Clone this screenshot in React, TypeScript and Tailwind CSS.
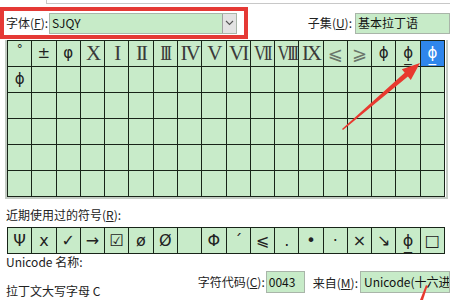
const CJK = { fontFamily: '"Noto Sans CJK SC", "Noto Sans", sans-serif' };
const SYM = { fontFamily: '"DejaVu Sans", "Noto Sans", sans-serif' };
const SERIF = { fontFamily: '"Liberation Serif", "DejaVu Serif", serif' };

type Cell = { ch: string; kind?: "serif" | "sym" | "sel"; size?: string };

const row1: Cell[] = [
  { ch: "°", size: "text-[12px] -translate-y-[5px]" },
  { ch: "±" },
  { ch: "φ" },
  { ch: "X", kind: "serif" },
  { ch: "I", kind: "serif" },
  { ch: "II", kind: "serif" },
  { ch: "III", kind: "serif" },
  { ch: "IV", kind: "serif" },
  { ch: "V", kind: "serif" },
  { ch: "VI", kind: "serif" },
  { ch: "VII", kind: "serif" },
  { ch: "VIII", kind: "serif" },
  { ch: "IX", kind: "serif" },
  { ch: "⩽", size: "text-[18px] text-[#6a756a]" },
  { ch: "⩾", size: "text-[18px] text-[#6a756a]" },
  { ch: "ɸ" },
  { ch: "ɸ̲" },
  { ch: "ɸ̲", kind: "sel" },
];

const recent: string[] = ["Ψ", "x", "✓", "→", "☑", "ø", "Ø", "", "Φ", "ˊ", "⩽", ".", "•", "·", "×", "↘", "ɸ̲", "□"];

function GridCell({ cell }: { cell?: Cell }) {
  if (!cell) return <div className="h-[26px] border-r border-b border-[#182418]" />;
  if (cell.kind === "sel")
    return (
      <div className="h-[26px] border-r border-b border-[#182418] bg-[#2f86ec] flex items-center justify-center text-white text-[15px]" style={SYM}>
        {cell.ch}
      </div>
    );
  if (cell.kind === "serif")
    return (
      <div className="h-[26px] border-r border-b border-[#182418] flex items-center justify-center overflow-hidden">
        <span
          className={`text-[21px] leading-none text-[#3a3a3a] ${cell.ch.length > 2 ? "tracking-[-3px] scale-x-[0.8]" : "tracking-[-2px]"}`}
          style={SERIF}
        >
          {cell.ch}
        </span>
      </div>
    );
  return (
    <div className="h-[26px] border-r border-b border-[#182418] flex items-center justify-center text-[#222]" style={SYM}>
      <span className={cell.size ?? "text-[15px]"}>{cell.ch}</span>
    </div>
  );
}

function Label({ text, hot, rest = "):" }: { text: string; hot: string; rest?: string }) {
  return (
    <span className="text-[12px] text-[#222] whitespace-nowrap" style={CJK}>
      {text}(<span className="underline">{hot}</span>{rest}
    </span>
  );
}

export default function App() {
  const grid: (Cell | undefined)[] = [...row1, { ch: "ɸ" }];
  while (grid.length < 18 * 6) grid.push(undefined);

  return (
    <div className="relative w-[450px] h-[300px] bg-white overflow-hidden">
      <div className="h-[7px]">
        <div className="ml-[46px] h-[4px] border-l border-b border-[#c8c8c8]" />
      </div>

      <div className="flex items-start h-[33px]">
        <div className="w-[248px] h-[32px] border-4 border-[#e53935] flex items-center pl-[2px]">
          <Label text="字体" hot="F" />
          <div className="ml-[1px] h-[21px] w-[188px] border border-[#a9b5a9] bg-[#c7ebc8] flex items-center">
            <span className="pl-[2px] text-[12px] text-[#111] flex-1" style={CJK}>SJQY</span>
            <div className="h-full w-[14px] border-l border-[#a0a0a0] bg-[#e3e3e3] flex items-center justify-center">
              <svg width="9" height="6" viewBox="0 0 9 6">
                <path d="M1 1 L4.5 4.5 L8 1" stroke="#555" strokeWidth="1.1" fill="none" />
              </svg>
            </div>
          </div>
        </div>
        <div className="ml-auto flex items-center h-[32px]">
          <Label text="子集" hot="U" />
          <div className="ml-[3px] h-[21px] w-[95px] border border-[#a9b5a9] bg-[#c7ebc8] flex items-center pl-[2px]">
            <span className="text-[12px] text-[#111] whitespace-nowrap" style={CJK}>基本拉丁语</span>
          </div>
        </div>
      </div>

      <div className="ml-[5px] w-[443px] border-l-2 border-r-2 border-b-2 border-[#c4ccc4]">
        <div className="grid grid-cols-[repeat(18,minmax(0,1fr))] w-[438px] border-t border-l border-[#182418] bg-[#c8ebc9]">
          {grid.map((c, i) => (
            <GridCell key={i} cell={c} />
          ))}
        </div>
      </div>

      <div className="pl-[6px] mt-[9px] h-[14px] flex items-center">
        <Label text="近期使用过的符号" hot="R" />
      </div>

      <div className="ml-[7px] mt-[5px] w-[438px] grid grid-cols-[repeat(18,minmax(0,1fr))] border-t border-l border-[#182418] bg-[#c8ebc9]">
        {recent.map((ch, i) => (
          <div key={i} className="h-[26px] border-r border-b border-[#182418] flex items-center justify-center text-[16px] text-[#222]" style={SYM}>
            {ch}
          </div>
        ))}
      </div>

      <div className="flex pl-[6px]">
        <div className="w-[221px] flex flex-col">
          <span className="text-[12px] text-[#222] leading-[16px]" style={CJK}>Unicode 名称:</span>
          <span className="text-[12px] text-[#222] leading-[16px] mt-[13px]" style={CJK}>拉丁文大写字母 C</span>
        </div>
        <div className="flex items-center h-[22px] mt-[17px]">
          <Label text="字符代码" hot="C" />
          <div className="ml-[1px] h-[22px] w-[39px] border border-[#a9b5a9] bg-[#c7ebc8] flex items-center pl-[2px]">
            <span className="text-[12px] text-[#111]" style={CJK}>0043</span>
          </div>
          <span className="ml-[8px]"><Label text="来自" hot="M" /></span>
          <div className="ml-[2px] h-[22px] w-[90px] border border-[#a9b5a9] bg-[#c7ebc8] flex items-center pl-[3px] overflow-hidden">
            <span className="text-[12px] text-[#111] whitespace-nowrap" style={CJK}>Unicode(十六进制)</span>
          </div>
        </div>
      </div>

      {/* red arrows drawn over the dialog */}
      <svg className="absolute inset-0 pointer-events-none" width="450" height="300" viewBox="0 0 450 300">
        <polygon points="342,129 404.7,72.7 401.8,69.3 420,63 410.8,79.9 407.9,76.5 343,130" fill="#e8392f" />
        <polygon points="420,300 426,285 427.5,286 423,300" fill="#e8392f" />
      </svg>
    </div>
  );
}
